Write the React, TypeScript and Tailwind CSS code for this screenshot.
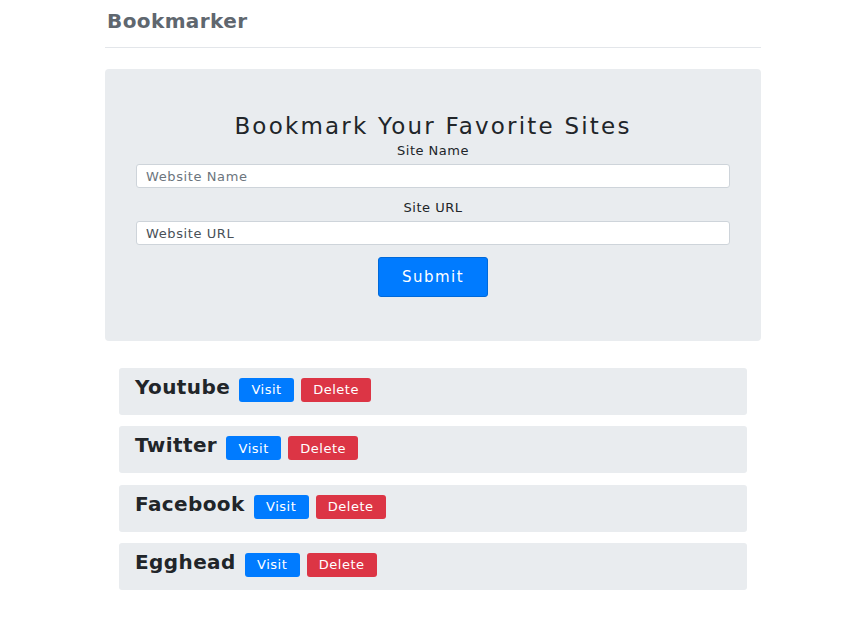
import React from "react";

const sites = ["Youtube", "Twitter", "Facebook", "Egghead"];

export default function App() {
  return (
    <div className="min-h-[639px] bg-white font-['DejaVu_Sans',sans-serif] text-[#212529]">
      <div className="w-[656px] ml-[105px]">
        <div className="h-[48px] border-b border-[#e3e6ea] pt-[9px]">
          <h3 className="text-[20px] leading-[24px] font-bold tracking-[0.4px] text-[#5f676f] pl-[2px]">Bookmarker</h3>
        </div>
        <div className="mt-[21px] h-[272px] rounded-[4px] bg-[#e9ecef] px-[31px] pt-[43px]">
          <h2 className="text-center text-[23px] leading-[28px] tracking-[2.2px]">Bookmark Your Favorite Sites</h2>
          <form className="mt-[3px] flex flex-col items-center">
            <label className="text-[13px] leading-[16px] tracking-[0.5px]">Site Name</label>
            <input
              className="mt-[5px] h-[24px] w-full rounded-[3px] border border-[#ced4da] bg-white pl-[9px] text-[13px] tracking-[0.6px] text-[#495057] placeholder:text-[#6c757d] outline-none"
              placeholder="Website Name"
            />
            <label className="mt-[12px] text-[13px] leading-[16px] tracking-[0.5px]">Site URL</label>
            <input
              className="mt-[5px] h-[24px] w-full rounded-[3px] border border-[#ced4da] bg-white pl-[9px] text-[13px] tracking-[0.6px] text-[#495057] placeholder:text-[#495057] outline-none"
              placeholder="Website URL"
            />
            <button
              type="button"
              className="mt-[12px] h-[40px] w-[110px] rounded-[3px] border border-[#0069d9] bg-[#007bff] text-[15px] tracking-[1.5px] text-white"
            >
              Submit
            </button>
          </form>
        </div>
        <div className="mt-[27px] px-[14px] flex flex-col gap-[11.3px]">
          {sites.map((s) => (
            <div key={s} className="flex h-[47px] items-start rounded-[3px] bg-[#e9ecef] pl-[16px] pt-[7px]">
              <h3 className="text-[20px] leading-[24px] font-bold tracking-[0.4px] text-[#212529]">{s}</h3>
              <a className="ml-[9px] mt-[3px] flex h-[24px] w-[55px] items-center justify-center rounded-[3px] bg-[#007bff] text-[13px] tracking-[0.5px] text-white">
                Visit
              </a>
              <a className="ml-[7px] mt-[3px] flex h-[24px] w-[70px] items-center justify-center rounded-[3px] bg-[#dc3545] text-[13px] tracking-[0.5px] text-white">
                Delete
              </a>
            </div>
          ))}
        </div>
      </div>
    </div>
  );
}
